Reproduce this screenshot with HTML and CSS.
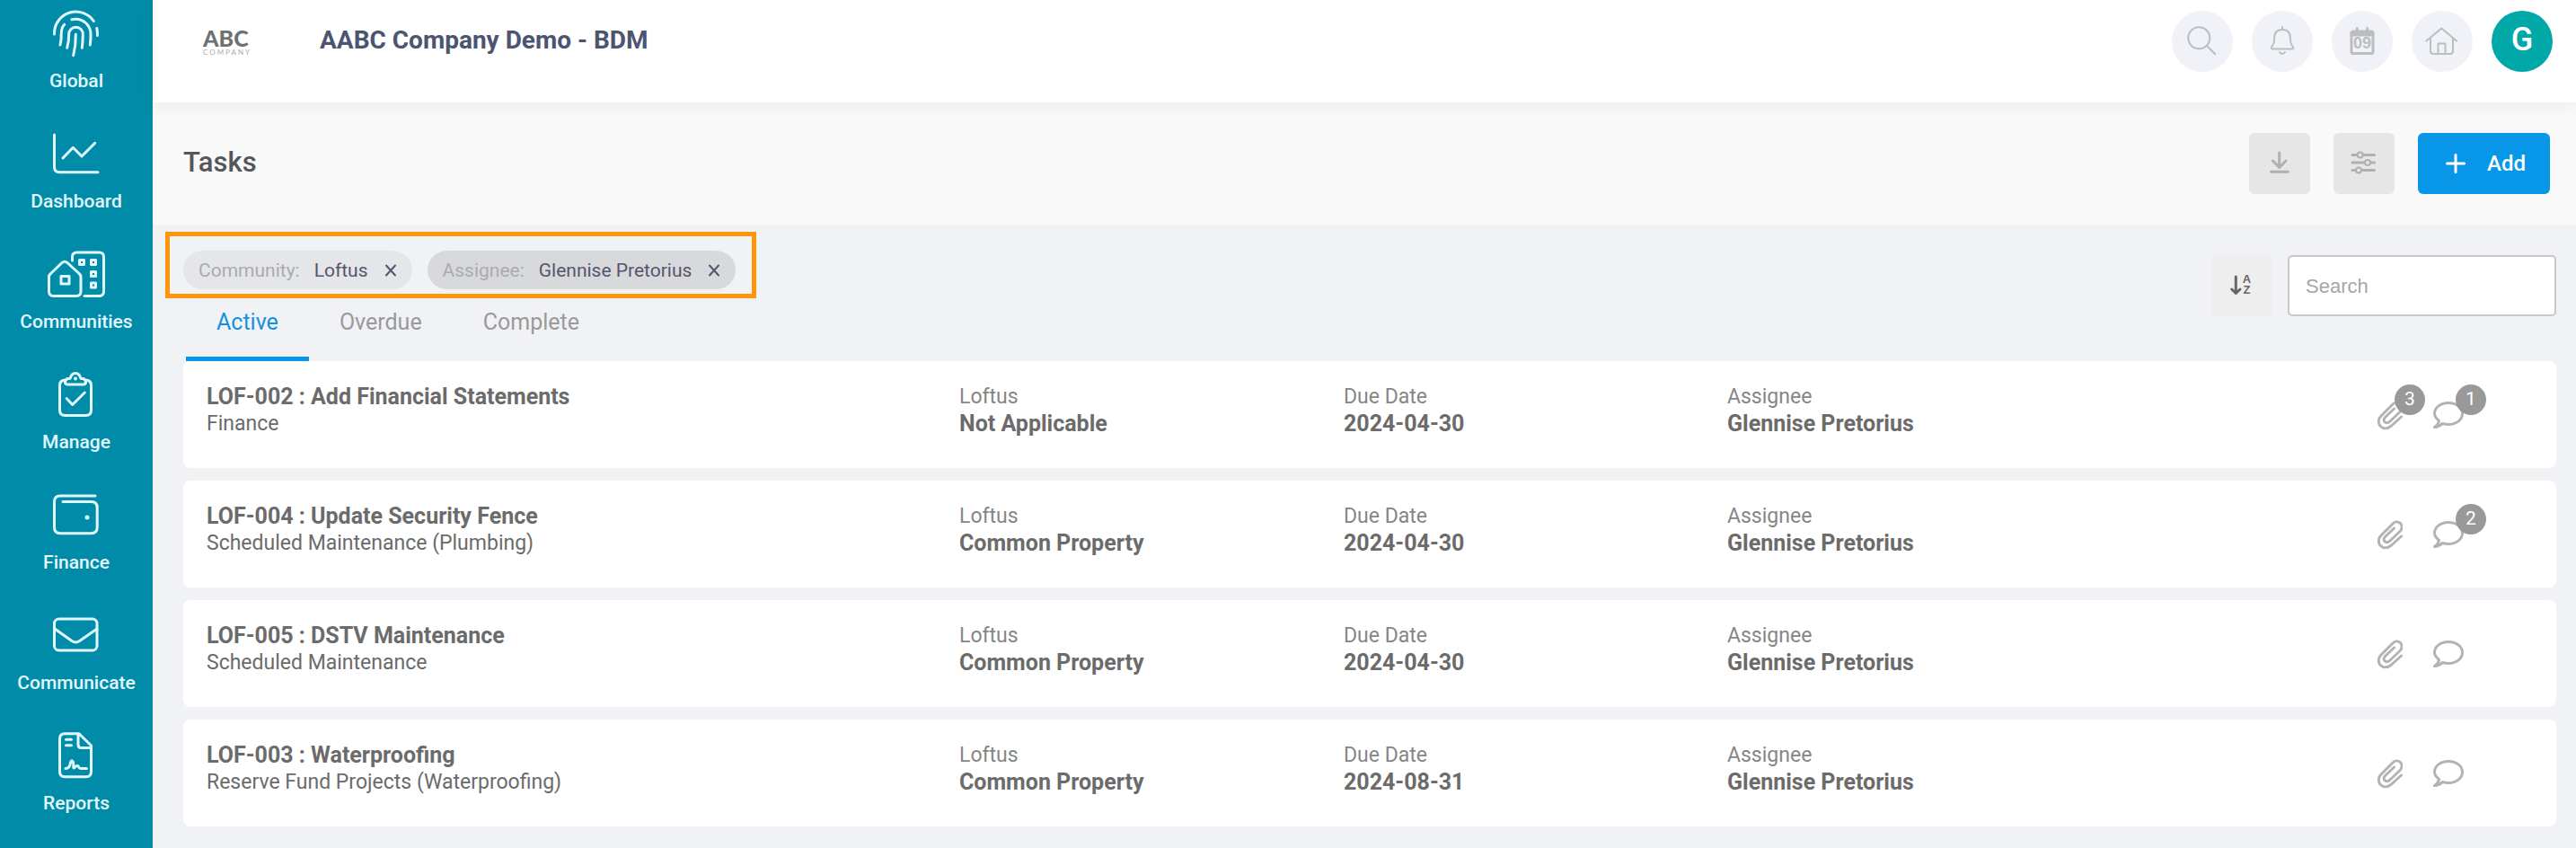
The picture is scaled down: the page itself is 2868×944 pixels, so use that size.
FILE: index.html
```html
<!DOCTYPE html>
<html lang="en">
<head>
  <meta charset="UTF-8">
  <meta name="viewport" content="width=device-width, initial-scale=1.0">
  <title>Tasks</title>
  <link rel="stylesheet" href="styles.css">
</head>
<body>
  <!-- shared row icons -->
  <svg class="sprite" aria-hidden="true">
    <symbol id="clip" viewBox="0 0 28 34">
      <path d="M26.500 19L15.500 29C6 37-3.500 26 4 18L16.500 5.500C22-1 30.500 6 25.500 13L14 24C10 28 4.500 24 8.500 19.500L18.500 10"/>
    </symbol>
    <symbol id="comment" viewBox="0 0 34 30">
      <path d="M6.500 21.500C3.500 19 1.500 17 1.500 13.500C1.500 6.500 8.500 1.500 17 1.500S32.500 6.500 32.500 13.500 25.500 25.500 17 25.500q-3.500 0-6.500-1-4 3.500-9 4 4-2.500 5-7z"/>
    </symbol>
  </svg>

  <div class="app">
    <nav class="sidebar">
      <a href="#">
        <svg viewBox="0 0 64 64"><path d="M7.500 33V31.500A24 24 0 0 1 51.300 18.500M54.800 26.500q.8 4 .7 8M14 45q1.500-6 1.200-12 0-7 3.500-10.700M27 16.800q9-2 16 4.200 5 5 5 12t-.7 12M21.700 48.300q2-7 2-15.300a7.800 7.800 0 0 1 15.600 0q0 8-1 15.300M31.300 33.300q.3 12-2.600 23.400"/></svg>
        <span>Global</span>
      </a>
      <a href="#">
        <svg viewBox="0 0 64 64"><path d="M7.500 11V47q0 5.700 5.700 5.700H56M17 37L28.300 25.300 38 35 52.700 20.300"/></svg>
        <span>Dashboard</span>
      </a>
      <a href="#">
        <svg viewBox="0 0 64 64"><path d="M1.500 35.500q0-2.500 2-4L16 19.500q3-2.500 6 0L35 31.500q2 1.500 2 4V51.500q0 5-5 5H6.500q-5 0-5-5zM15 34.500h9v8.500h-9zM27.500 17V13q0-5 5-5H57.500q5 0 5 5V51.500q0 5-5 5H41"/><path d="M35.500 16.500h5v5h-5zM48.500 16.500h5v5h-5zM48.500 29.500h5v5h-5zM48.500 42h5v5h-5z"/></svg>
        <span>Communities</span>
      </a>
      <a href="#">
        <svg viewBox="0 0 64 64"><path d="M20 16q-6.500 0-6.500 6V49.500q0 6 6 6H42.500q6 0 6-6V22q0-6-6.500-6M22.500 14.500h2.500q1.500-6 6-6t6 6h2.500q3 1 3 4 0 2.500-3 2.500H22.500q-3 0-3-2.500 0-3 3-4zM21.300 36.700l6.400 6.800L41.300 30"/><circle class="dot" cx="31" cy="14.500" r="2"/></svg>
        <span>Manage</span>
      </a>
      <a href="#">
        <svg viewBox="0 0 64 64"><path d="M53 11H14q-6.500 0-6.500 6.500V46q0 6.700 6.700 6.700H48.500q6.700 0 6.700-6.700V24q0-6.500-6.700-6.500H17"/><circle class="dot" cx="44" cy="35" r="2.500"/></svg>
        <span>Finance</span>
      </a>
      <a href="#">
        <svg viewBox="0 0 64 64"><rect x="7.500" y="14" width="47.500" height="35" rx="5"/><path d="M8 25L27 38.500q4.300 3 8.600 0L55 25"/></svg>
        <span>Communicate</span>
      </a>
      <a href="#">
        <svg viewBox="0 0 64 64"><path d="M19 7.800H35L48.500 21V50q0 5.700-5.700 5.700H19.200q-5.700 0-5.700-5.700V13.500q0-5.700 5.500-5.700zM34 8V20q0 3.500 3.500 3.500H48M20.500 14.300H26.500M20.500 20.800H26.500M20 46.500c4 0 5-3 5.500-6.500q1-4 3-.5c1 3-.5 6.500.8 6.500s2-3 4-2.500 1 3 3.500 3H43.500"/></svg>
        <span>Reports</span>
      </a>
    </nav>

    <div class="page">
      <header class="topbar">
        <div class="logo"><strong>ABC</strong><small>COMPANY</small></div>
        <div class="company">AABC Company Demo - BDM</div>
        <div class="top-actions">
          <button class="round" aria-label="Search"><svg viewBox="0 0 68 68"><circle cx="30.300" cy="30.300" r="12"/><path d="M38.700 38.700L48.300 48.300"/></svg></button>
          <button class="round" aria-label="Notifications"><svg viewBox="0 0 68 68"><path d="M34 18v3M34 21c-6 0-9 4-9 10 0 5-.5 6-2.500 8.500-1.500 2-.5 3 1 3h21c1.500 0 2.500-1 1-3-2-2.500-2.500-3.500-2.500-8.500 0-6-3-10-9-10zM31 46q3 4 6 0"/></svg></button>
          <button class="round" aria-label="Calendar"><svg class="calendar" viewBox="0 0 68 68"><rect x="22" y="23" width="24" height="24.500" rx="2"/><path d="M28.300 19.500v4M39.700 19.500v4M22 24.500H46M22 27H46"/><text x="34" y="42">09</text></svg></button>
          <button class="round" aria-label="Home"><svg viewBox="0 0 68 68"><path d="M16.500 33.500L33.300 19.500 50 33.500M21 30.500V44.500q0 3.500 3.500 3.500H42.500q3.500 0 3.500-3.500V30.500M29.500 48V36.500H37.500V48"/></svg></button>
          <button class="round avatar">G</button>
        </div>
      </header>

      <div class="page-head">
        <h1>Tasks</h1>
        <div class="head-actions">
          <button class="square" aria-label="Download"><svg viewBox="0 0 68 68"><path d="M33.700 22V38M26.500 31L33.700 38.500 41 31M24.500 43.300H43.500"/></svg></button>
          <button class="square" aria-label="Filters"><svg viewBox="0 0 68 68"><path d="M21 24.500H45.500M21 33H45.500M21 41.500H45.500"/><g class="knobs"><circle cx="29.700" cy="24.500" r="3"/><circle cx="38" cy="33" r="3"/><circle cx="28" cy="41.500" r="3"/></g></svg></button>
          <button class="add"><svg viewBox="0 0 22 22"><path d="M11 1.500V20.500M1.500 11H20.500"/></svg>Add</button>
        </div>
      </div>

      <main>
        <div class="toolbar">
          <div class="filters">
            <div class="chips">
              <span class="chip"><span class="key">Community:</span>Loftus<button aria-label="Remove community"><svg viewBox="0 0 14 14"><path d="M2 1.500L12 12.500M12 1.500L2 12.500"/></svg></button></span>
              <span class="chip dark"><span class="key">Assignee:</span>Glennise Pretorius<button aria-label="Remove assignee"><svg viewBox="0 0 14 14"><path d="M2 1.500L12 12.500M12 1.500L2 12.500"/></svg></button></span>
            </div>
            <div class="tabs">
              <button class="active">Active</button>
              <button>Overdue</button>
              <button>Complete</button>
            </div>
          </div>
          <div class="search">
            <button class="square sort" aria-label="Sort"><svg viewBox="0 0 68 68"><path d="M27.300 24V42M22.700 38L27.300 42.500 32 38"/><text x="39.500" y="31">A</text><text x="39.500" y="43">Z</text></svg></button>
            <input type="text" placeholder="Search" aria-label="Search tasks">
          </div>
        </div>

        <div class="tasks">
          <article class="task">
            <div><h2>LOF-002 : Add Financial Statements</h2><p>Finance</p></div>
            <div class="field"><span>Loftus</span><strong>Not Applicable</strong></div>
            <div class="field"><span>Due Date</span><strong>2024-04-30</strong></div>
            <div class="field"><span>Assignee</span><strong>Glennise Pretorius</strong></div>
            <div class="links">
              <a href="#" aria-label="Attachments"><svg class="clip"><use href="#clip"/></svg><span class="badge">3</span></a>
              <a href="#" aria-label="Comments"><svg class="comment"><use href="#comment"/></svg><span class="badge">1</span></a>
            </div>
          </article>
          <article class="task">
            <div><h2>LOF-004 : Update Security Fence</h2><p>Scheduled Maintenance (Plumbing)</p></div>
            <div class="field"><span>Loftus</span><strong>Common Property</strong></div>
            <div class="field"><span>Due Date</span><strong>2024-04-30</strong></div>
            <div class="field"><span>Assignee</span><strong>Glennise Pretorius</strong></div>
            <div class="links">
              <a href="#" aria-label="Attachments"><svg class="clip"><use href="#clip"/></svg></a>
              <a href="#" aria-label="Comments"><svg class="comment"><use href="#comment"/></svg><span class="badge">2</span></a>
            </div>
          </article>
          <article class="task">
            <div><h2>LOF-005 : DSTV Maintenance</h2><p>Scheduled Maintenance</p></div>
            <div class="field"><span>Loftus</span><strong>Common Property</strong></div>
            <div class="field"><span>Due Date</span><strong>2024-04-30</strong></div>
            <div class="field"><span>Assignee</span><strong>Glennise Pretorius</strong></div>
            <div class="links">
              <a href="#" aria-label="Attachments"><svg class="clip"><use href="#clip"/></svg></a>
              <a href="#" aria-label="Comments"><svg class="comment"><use href="#comment"/></svg></a>
            </div>
          </article>
          <article class="task">
            <div><h2>LOF-003 : Waterproofing</h2><p>Reserve Fund Projects (Waterproofing)</p></div>
            <div class="field"><span>Loftus</span><strong>Common Property</strong></div>
            <div class="field"><span>Due Date</span><strong>2024-08-31</strong></div>
            <div class="field"><span>Assignee</span><strong>Glennise Pretorius</strong></div>
            <div class="links">
              <a href="#" aria-label="Attachments"><svg class="clip"><use href="#clip"/></svg></a>
              <a href="#" aria-label="Comments"><svg class="comment"><use href="#comment"/></svg></a>
            </div>
          </article>
        </div>
      </main>
    </div>
  </div>
</body>
</html>
```
FILE: styles.css
```css
* {
  box-sizing: border-box;
}
body {
  margin: 0;
  font-family: Roboto, sans-serif;
  font-size: 23px;
  color: #6b6b6b;
  background: #f1f2f6;
}
h1, h2, p {
  margin: 0;
}
button {
  border: 0;
  padding: 0;
  background: none;
  font: inherit;
  color: inherit;
  cursor: pointer;
}
a {
  color: inherit;
  text-decoration: none;
}
svg {
  display: block;
  overflow: visible;
  fill: none;
  stroke: currentColor;
  stroke-linecap: round;
  stroke-linejoin: round;
}
svg text {
  fill: currentColor;
  stroke: none;
  text-anchor: middle;
  font-family: "Liberation Sans", sans-serif;
  font-weight: bold;
}
.sprite {
  display: none;
}
.app {
  display: flex;
  min-height: 100vh;
}

/* sidebar */
.sidebar {
  width: 170px;
  flex: none;
  display: flex;
  flex-direction: column;
  gap: 37px;
  padding: 5px 0 20px;
  background: #008ca8;
  color: #e2f8ff;
  font-size: 21px;
  font-weight: 500;
}
.sidebar a {
  display: flex;
  flex-direction: column;
  align-items: center;
  gap: 9px;
  line-height: 24px;
}
.sidebar svg {
  width: 64px;
  height: 64px;
  stroke-width: 3;
}
.sidebar .dot {
  fill: currentColor;
  stroke: none;
}

/* header */
.page {
  flex: 1;
  min-width: 0;
}
.topbar {
  position: relative;
  display: flex;
  height: 114px;
  padding: 12px 26px 0 56px;
  background: #fff;
  box-shadow: 0 4px 20px rgba(0, 0, 0, 0.06);
}
.logo {
  width: 130px;
  padding-top: 18px;
  display: flex;
  flex-direction: column;
  color: #707070;
}
.logo strong {
  font: 900 25px/24px Lato, sans-serif;
}
.logo small {
  font: 8px/8px Lato, sans-serif;
  letter-spacing: 2px;
  color: #aaa;
}
.company {
  line-height: 66px;
  font-size: 28px;
  font-weight: 700;
  color: #4b5570;
}
.top-actions {
  display: flex;
  gap: 21px;
  margin-left: auto;
}
.round {
  width: 68px;
  height: 68px;
  border-radius: 50%;
  background: #f1f2f7;
  color: #bcbdc1;
}
.round svg {
  stroke-width: 2;
}
.round .calendar {
  stroke-width: 3;
}
.calendar text {
  font-size: 18px;
}
.avatar {
  background: #00a8a8;
  color: #fff;
  font-size: 36px;
  font-weight: 500;
  line-height: 64px;
  padding-bottom: 4px;
}

.page-head {
  display: flex;
  justify-content: space-between;
  align-items: center;
  height: 136px;
  padding: 0 29px 0 34px;
  background: #f9f9f9;
}
h1 {
  padding-bottom: 3px;
  font-size: 31px;
  font-weight: 500;
  line-height: 36px;
  color: #55565a;
}
.head-actions {
  display: flex;
  gap: 26px;
}
.square {
  width: 68px;
  height: 68px;
  border-radius: 6px;
  background: #e6e6e6;
  color: #b0b0b4;
}
.square svg {
  stroke-width: 3;
}
.knobs {
  fill: #e6e6e6;
  stroke-width: 2;
}
.add {
  display: flex;
  align-items: center;
  gap: 24px;
  height: 68px;
  padding: 0 27px 0 31px;
  border-radius: 6px;
  background: #0896e8;
  color: #fff;
  font-size: 24px;
  font-weight: 500;
}
.add svg {
  width: 22px;
  height: 22px;
  stroke-width: 3;
}

/* filters, tabs and search */
main {
  padding: 8px 22px 24px 34px;
}
.toolbar {
  display: flex;
  justify-content: space-between;
}
.filters {
  display: flex;
  flex-direction: column;
  align-items: flex-start;
}
.chips {
  display: flex;
  gap: 17px;
  margin-left: -20px;
  padding: 16px 18px 5px 15px;
  border: 5px solid #ff950a;
}
.chip {
  display: flex;
  align-items: center;
  height: 43px;
  padding: 0 17px;
  border-radius: 22px;
  background: #e5e6ea;
  color: #55566a;
  font-size: 21px;
}
.chip.dark {
  background: #d8d9dd;
}
.chip .key {
  margin-right: 16px;
  color: #ababab;
}
.chip button {
  margin-left: 18px;
}
.chip svg {
  width: 14px;
  height: 14px;
  stroke-width: 2;
}
.tabs {
  display: flex;
  height: 70px;
  padding-left: 3px;
}
.tabs button {
  padding: 0 34px 12px;
  border-bottom: 5px solid transparent;
  font-size: 25px;
  color: #9a9a9a;
}
.tabs .active {
  border-color: #0896e8;
  color: #1590dc;
}
.search {
  display: flex;
  align-items: flex-start;
  gap: 17px;
  padding-top: 26px;
}
.sort {
  background: #eee;
  color: #666;
}
.sort text {
  font-size: 13px;
}
.search input {
  width: 299px;
  height: 68px;
  padding: 2px 18px 0;
  border: 2px solid #c8c8c8;
  border-radius: 5px;
  background: #fff;
  font: 22px "Liberation Sans", sans-serif;
}
.search input::placeholder {
  color: #a6a6a6;
}

/* task list */
.tasks {
  display: grid;
  gap: 14px;
}
.task {
  display: grid;
  grid-template-columns: 838fr 428fr 427fr 427fr 470fr;
  padding: 25px 26px 34px;
  border-radius: 8px;
  background: #fff;
  line-height: 30px;
}
h2 {
  font-size: 25px;
  font-weight: 700;
  line-height: 30px;
}
.field span,
.field strong {
  display: block;
}
.field span {
  color: #868686;
}
.field strong {
  font-size: 25px;
}
.links {
  display: flex;
  justify-content: flex-end;
  align-items: center;
  gap: 34px;
  padding: 10px 77px 0 0;
  color: #b3b3b3;
}
.links a {
  position: relative;
}
.links svg {
  width: 34px;
  height: 30px;
  stroke-width: 3;
}
.links .clip {
  width: 28px;
  height: 34px;
}
.badge {
  position: absolute;
  left: 19px;
  bottom: 17px;
  width: 34px;
  height: 34px;
  border-radius: 50%;
  background: #999;
  color: #fff;
  font-size: 21px;
  line-height: 33px;
  text-align: center;
}
.comment + .badge {
  left: 25px;
  bottom: 15px;
}
```
